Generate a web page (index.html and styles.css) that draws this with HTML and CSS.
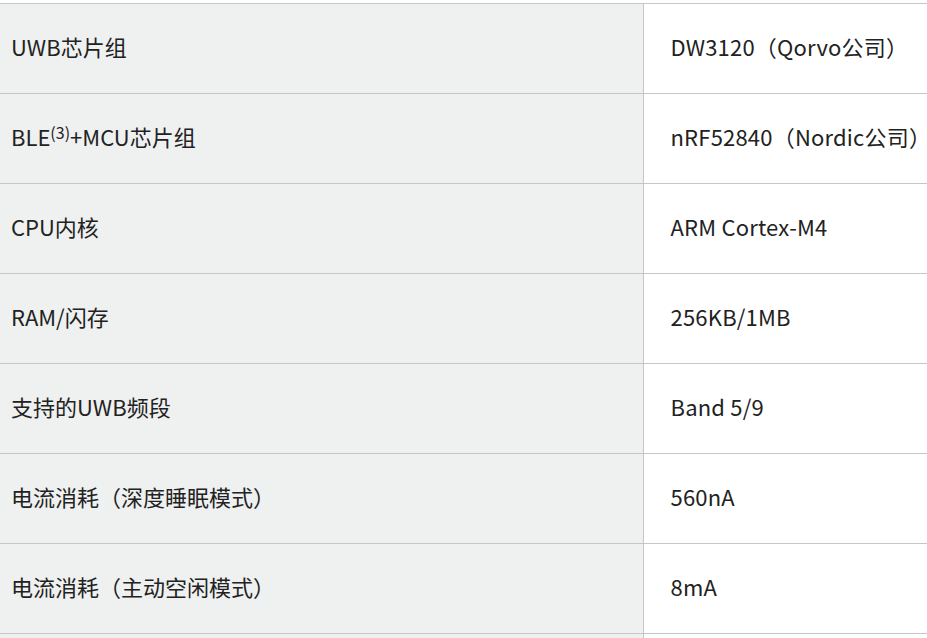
FILE: index.html
```html
<!DOCTYPE html>
<html lang="zh">
<head>
<meta charset="utf-8">
<link rel="stylesheet" href="styles.css">
</head>
<body>
<div class="wrap">
<table class="spec">
<tr><td class="k">UWB芯片组</td><td class="v">DW3120（Qorvo公司）</td></tr>
<tr><td class="k">BLE<sup>(3)</sup>+MCU芯片组</td><td class="v">nRF52840（Nordic公司）</td></tr>
<tr><td class="k">CPU内核</td><td class="v">ARM Cortex-M4</td></tr>
<tr><td class="k">RAM/闪存</td><td class="v">256KB/1MB</td></tr>
<tr><td class="k">支持的UWB频段</td><td class="v">Band 5/9</td></tr>
<tr><td class="k">电流消耗（深度睡眠模式）</td><td class="v">560nA</td></tr>
<tr><td class="k">电流消耗（主动空闲模式）</td><td class="v">8mA</td></tr>
<tr><td class="k">&nbsp;</td><td class="v">&nbsp;</td></tr>
</table>
</div>
</body>
</html>
```
FILE: styles.css
```css
html, body {
  margin: 0;
  padding: 0;
  background: #fff;
  overflow: hidden;
}
.wrap {
  padding-top: 3px;
  width: 1000px;
}
.spec {
  border-collapse: collapse;
  width: 1000px;
  table-layout: fixed;
  font-family: "Noto Sans CJK SC", "Noto Sans", sans-serif;
  font-size: 22px;
  color: #222;
}
.spec td {
  box-sizing: border-box;
  height: 90px;
  border-top: 1px solid #c6c6c6;
  border-bottom: 1px solid #c6c6c6;
  vertical-align: middle;
  padding: 0 0 5px 0;
  white-space: nowrap;
  line-height: 1;
}
.spec .k {
  width: 643px;
  background: #eff0f0;
  padding-left: 11px;
  border-right: 1px solid #c6c6c6;
}
.spec .v {
  padding-left: 27px;
  background: #fff;
  letter-spacing: 0.2px;
}
.spec sup {
  font-size: 16px;
  vertical-align: 7px;
  line-height: 0;
}
```
